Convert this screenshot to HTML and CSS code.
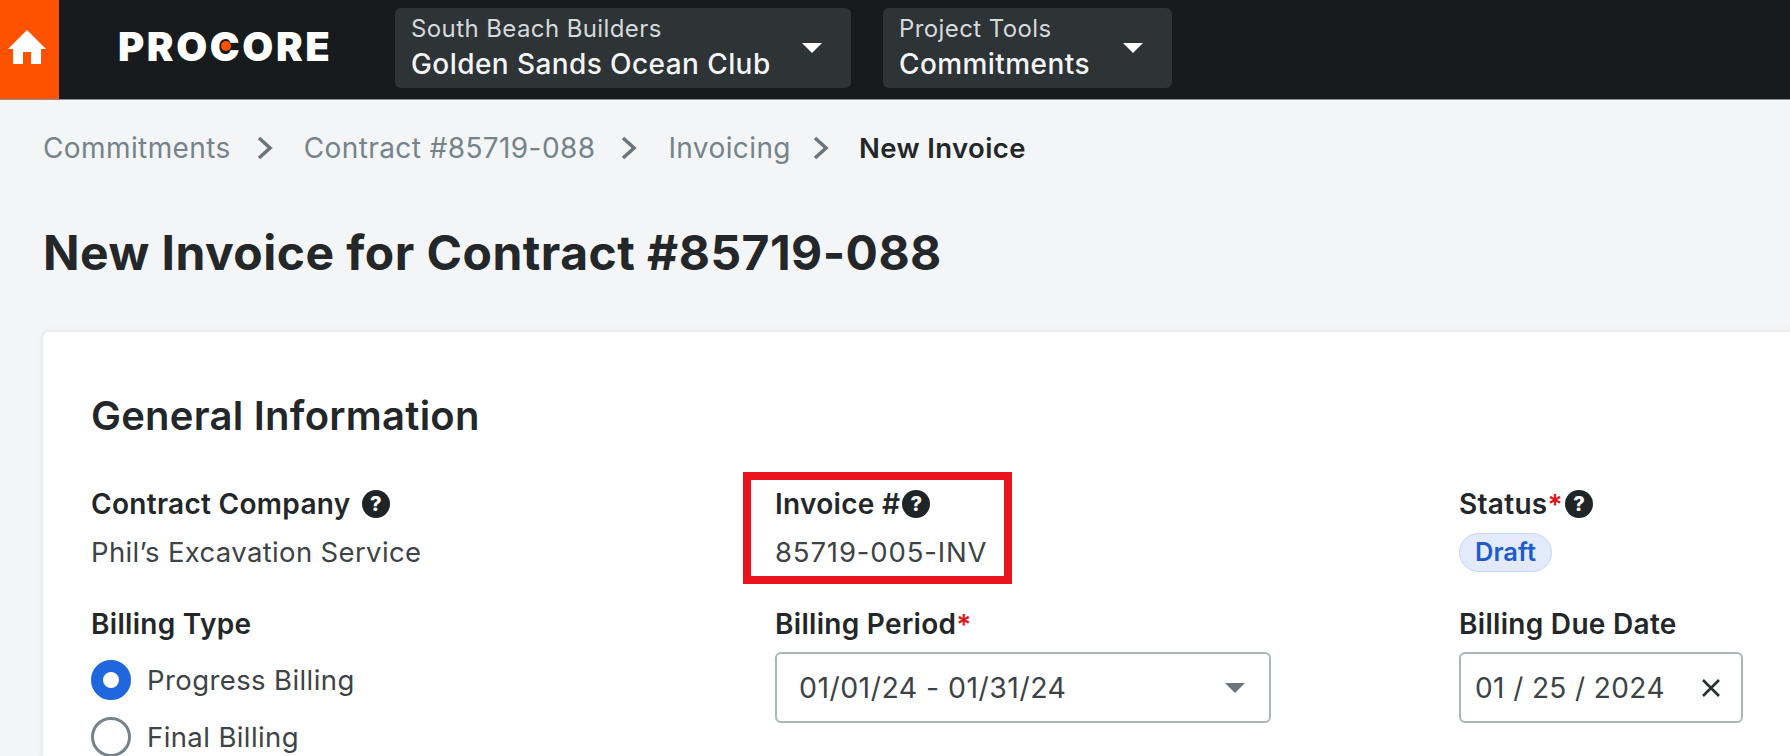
FILE: index.html
```html
<!DOCTYPE html>
<html lang="en">
<head>
    <meta charset="UTF-8">
    <meta name="viewport" content="width=device-width, initial-scale=1.0">
    <title>New Invoice</title>
    <link rel="stylesheet" href="styles.css">
</head>
<body>
    <header class="topbar">
        <a class="home">
            <svg width="38" height="34" viewBox="0 0 38 34"><path d="M19 0 L38 19 H33 V34 H23 V22 H15 V34 H5 V19 H0 Z" fill="#fff"/></svg>
        </a>
        <div class="logo">PRO<span class="logo-c">C</span>ORE</div>
        <div class="picker picker-project">
            <div class="picker-text">
                <div class="picker-small">South Beach Builders</div>
                <div class="picker-big">Golden Sands Ocean Club</div>
            </div>
            <span class="caret caret-white"></span>
        </div>
        <div class="picker picker-tools">
            <div class="picker-text">
                <div class="picker-small">Project Tools</div>
                <div class="picker-big">Commitments</div>
            </div>
            <span class="caret caret-white"></span>
        </div>
    </header>

    <nav class="crumbs">
        <a>Commitments</a>
        <svg class="chev" width="17" height="26" viewBox="0 0 17 26"><path d="M3 3 L14 13 L3 23" fill="none" stroke="#6a767c" stroke-width="3.6"/></svg>
        <a>Contract #85719-088</a>
        <svg class="chev" width="17" height="26" viewBox="0 0 17 26"><path d="M3 3 L14 13 L3 23" fill="none" stroke="#6a767c" stroke-width="3.6"/></svg>
        <a>Invoicing</a>
        <svg class="chev chev-last" width="17" height="26" viewBox="0 0 17 26"><path d="M3 3 L14 13 L3 23" fill="none" stroke="#6a767c" stroke-width="3.6"/></svg>
        <span class="crumb-current">New Invoice</span>
    </nav>

    <h1 class="page-title">New Invoice for Contract #85719-088</h1>

    <main class="card">
        <h2 class="card-title">General Information</h2>
        <div class="form-grid">
            <div class="field">
                <div class="label">Contract Company <span class="help">?</span></div>
                <div class="value">Phil’s Excavation Service</div>
            </div>
            <div class="field">
                <div class="label">Invoice #<span class="help help-near">?</span></div>
                <div class="value value-number">85719-005-INV</div>
                <div class="red-box"></div>
            </div>
            <div class="field">
                <div class="label">Status<span class="req">*</span><span class="help help-near">?</span></div>
                <div class="pill">Draft</div>
            </div>

            <div class="field">
                <div class="label">Billing Type</div>
                <div class="radios">
                    <div class="radio-row"><span class="radio radio-on"></span>Progress Billing</div>
                    <div class="radio-row"><span class="radio"></span>Final Billing</div>
                </div>
            </div>
            <div class="field">
                <div class="label">Billing Period<span class="req">*</span></div>
                <div class="input input-period">
                    <span>01/01/24 - 01/31/24</span>
                    <span class="caret caret-grey"></span>
                </div>
            </div>
            <div class="field">
                <div class="label">Billing Due Date</div>
                <div class="input input-date">
                    <span>01 / 25 / 2024</span>
                    <svg width="20" height="20" viewBox="0 0 20 20"><path d="M2 2 L18 18 M18 2 L2 18" stroke="#2a2f32" stroke-width="2.6"/></svg>
                </div>
            </div>
        </div>
    </main>
</body>
</html>
```

FILE: styles.css
```css
html, body {
    height: 756px;
    overflow: hidden;
}
body {
    margin: 0;
    background-color: #f4f5f6;
    color: #232729;
    font-family: Inter, "Noto Sans", sans-serif;
}

/* top bar */
.topbar {
    display: flex;
    align-items: center;
    height: 99px;
    background-color: #171b1d;
    border-bottom: 1px solid #8a9094;
}
.home {
    display: flex;
    align-items: center;
    align-self: stretch;
    box-sizing: border-box;
    width: 59px;
    padding: 0 0 5px 8px;
    background-color: #ff5200;
}
.logo {
    width: 213px;
    margin: 0 64px 5px 59px;
    color: #fff;
    font-size: 40px;
    font-weight: 900;
    line-height: 40px;
    letter-spacing: 2.6px;
    white-space: nowrap;
}
.logo-c {
    position: relative;
}
.logo-c::after {
    content: "";
    position: absolute;
    left: 11px;
    top: 19px;
    width: 10px;
    height: 10px;
    border-radius: 50%;
    background-color: #ff5200;
}
.picker {
    display: flex;
    align-items: center;
    justify-content: space-between;
    box-sizing: border-box;
    height: 80px;
    margin-bottom: 3px;
    padding: 0 29px 0 16px;
    background-color: #2e3336;
    border-radius: 6px;
}
.picker-project {
    width: 456px;
    margin-right: 32px;
}
.picker-tools {
    width: 289px;
}
.picker-text {
    padding-top: 1px;
}
.picker-small {
    color: #d5dadc;
    font-size: 24px;
    line-height: 30px;
    letter-spacing: 0.4px;
}
.picker-big {
    color: #f4f5f6;
    font-size: 28px;
    font-weight: 500;
    line-height: 40px;
    letter-spacing: 0.42px;
}
.caret {
    display: block;
    width: 0;
    height: 0;
    border-left: 10px solid transparent;
    border-right: 10px solid transparent;
}
.caret-white {
    border-top: 10px solid #fff;
}
.caret-grey {
    border-top: 10px solid #6a767c;
}

/* breadcrumbs */
.crumbs {
    display: flex;
    align-items: center;
    gap: 28px;
    height: 34px;
    margin: 31px 0 0 43px;
    color: #75838a;
    font-size: 28px;
    line-height: 34px;
    letter-spacing: 0.4px;
}
.chev {
    margin: 0 3px 0 -3px;
}
.chev-last {
    margin: 0 2px 0 -7px;
}
.crumb-current {
    color: #232729;
    font-size: 27.5px;
    font-weight: 600;
}

.page-title {
    margin: 60px 0 0 43px;
    font-size: 48px;
    font-weight: 700;
    line-height: 56px;
    letter-spacing: 0.46px;
}

/* card */
.card {
    box-sizing: border-box;
    width: 1800px;
    height: 424px;
    margin: 51px 0 0 43px;
    padding: 62px 48px 0;
    background-color: #fff;
    border-radius: 6px 6px 0 0;
    box-shadow: 0 0 6px rgba(0, 0, 0, 0.1);
}
.card-title {
    margin: 0;
    font-size: 40px;
    font-weight: 600;
    line-height: 44px;
    letter-spacing: 0.25px;
}
.form-grid {
    display: grid;
    grid-template-columns: 684px 684px 300px;
    row-gap: 36px;
    margin-top: 50px;
}
.field {
    position: relative;
}
.label {
    display: flex;
    align-items: center;
    height: 32px;
    font-size: 28px;
    font-weight: 600;
    letter-spacing: 0.3px;
    white-space: pre;
}
.value {
    margin-top: 16px;
    color: #3d4346;
    font-size: 27.5px;
    line-height: 32px;
    letter-spacing: 0.35px;
}
.value-number {
    letter-spacing: 0.85px;
}
.req {
    align-self: flex-start;
    color: #e0161e;
    font-size: 28px;
}
.help {
    display: inline-flex;
    align-items: center;
    justify-content: center;
    width: 28px;
    height: 28px;
    margin-left: 4px;
    border-radius: 50%;
    background-color: #1f2426;
    color: #fff;
    font-size: 20px;
    font-weight: 800;
    letter-spacing: 0;
}
.help-near {
    margin-left: 2px;
}
.red-box {
    position: absolute;
    left: -32px;
    top: -16px;
    box-sizing: border-box;
    width: 269px;
    height: 112px;
    border: 8px solid #e8141b;
}
.pill {
    display: inline-block;
    box-sizing: border-box;
    height: 39px;
    margin-top: 13px;
    padding: 0 15px;
    background-color: #e3ebfb;
    border: 1px solid #c4d6f8;
    border-radius: 20px;
    color: #1d5cc9;
    font-size: 25.5px;
    font-weight: 600;
    line-height: 36px;
}
.radios {
    display: flex;
    flex-direction: column;
    gap: 17px;
    margin-top: 20px;
}
.radio-row {
    display: flex;
    align-items: center;
    gap: 16px;
    color: #3d4346;
    font-size: 27.5px;
    letter-spacing: 0.4px;
}
.radio {
    box-sizing: border-box;
    width: 40px;
    height: 40px;
    background-color: #fff;
    border: 3px solid #75838a;
    border-radius: 50%;
}
.radio-on {
    border: 12px solid #2066df;
}
.input {
    display: flex;
    align-items: center;
    justify-content: space-between;
    box-sizing: border-box;
    height: 71px;
    margin-top: 12px;
    background-color: #fff;
    border: 2px solid #acb5b9;
    border-radius: 6px;
    color: #3d4346;
    font-size: 28.5px;
    letter-spacing: 0.45px;
}
.input-period {
    width: 496px;
    padding: 0 24px 0 22px;
}
.input-date {
    width: 284px;
    padding: 0 20px 0 14px;
    font-size: 28px;
    letter-spacing: 0.4px;
}
```
